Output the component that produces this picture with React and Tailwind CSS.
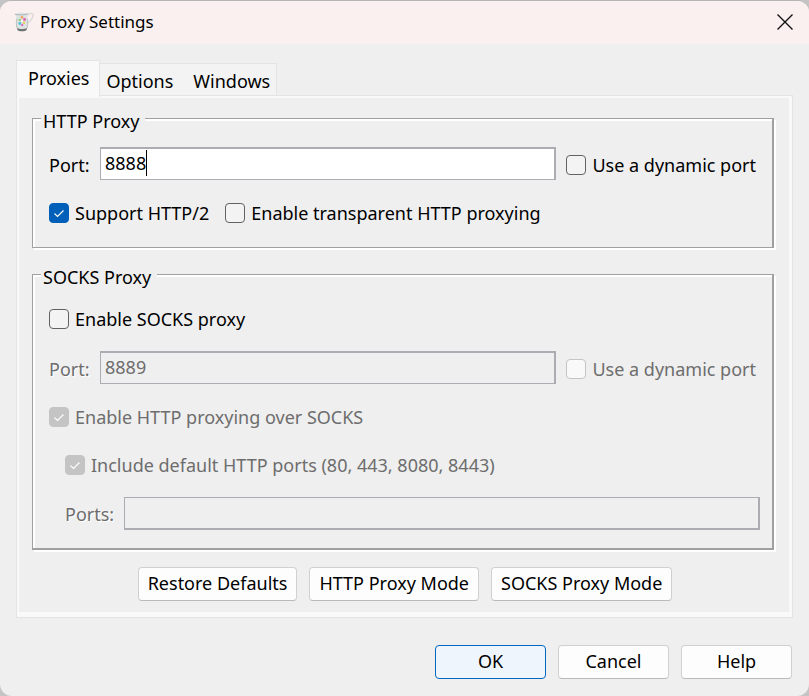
import { useState } from 'react'

const TABS = ['Options', 'Windows']
const MODES = ['Restore Defaults', 'HTTP Proxy Mode', 'SOCKS Proxy Mode']

function JugIcon() {
  return (
    <svg viewBox="0 0 20 20" className="h-5 w-5" aria-hidden="true">
      <path d="M13.5 3C16 .8 19.300.6 19 3.500c-.2 3-2.500 5.500-5.500 7.500" fill="none" stroke="#dcd8d8" strokeWidth="1.300" />
      <path d="M.8 2.200C2.500 1 4.500.7 7 .7s5.500.2 7 1.200c-.8 1.800-1 3.300-.6 5.600.5 3 .6 6.500-.4 9.500-.6 2.800-9.400 2.800-10 0-1-3.500-.8-6.500-.4-9.500C2.900 5.500 2.400 4 .8 2.200z" fill="#dde3e3" />
      <path d="M.8 2.200c3.500 1 9.700 1 13.200-.3" fill="none" stroke="#a9b0b1" strokeWidth=".9" />
      <path d="M2.800 6.500c-.6 4-.5 7 .2 9.500M13.200 6.500c.7 4 .6 7 0 9.500" fill="none" stroke="#b5bdbd" strokeWidth=".9" />
      <path d="M3 16c2.500 1.300 7.500 1.300 10 0l-.3 1.800c-1.500 2-7.900 2-9.400 0z" fill="#6e7372" />
      <circle cx="8" cy="5.300" r="1.300" fill="#f0a05c" />
      <circle cx="10.500" cy="7.500" r="1.400" fill="#e35fae" />
      <circle cx="5.700" cy="8" r="1.300" fill="#9ccf7c" />
      <circle cx="8" cy="9" r="1" fill="#fff" />
      <circle cx="10" cy="10.800" r="1.200" fill="#e8d150" />
      <circle cx="5.800" cy="11.500" r="1.400" fill="#4fc3dc" />
      <circle cx="8.200" cy="13" r="1.200" fill="#d973c4" />
    </svg>
  )
}

function Checkbox({ label, checked = false, disabled = false }) {
  const [on, setOn] = useState(checked)
  return (
    <label className={`flex shrink-0 items-center gap-1.5 whitespace-nowrap ${disabled ? 'text-[#6d6d6d]' : ''}`}>
      <span className="grid h-5 w-5 place-items-center">
        <input
          type="checkbox"
          checked={on}
          disabled={disabled}
          onChange={e => setOn(e.target.checked)}
          className="col-start-1 row-start-1 h-5 w-5 appearance-none rounded border border-[#626262] bg-[#f3f3f3] checked:border-[#005fb8] checked:bg-[#005fb8] disabled:border-[#c4c4c4] disabled:bg-[#f9f9f9] disabled:checked:border-[#c4c4c4] disabled:checked:bg-[#c4c4c4]"
        />
        {on && (
          <svg viewBox="0 0 20 20" className="pointer-events-none col-start-1 row-start-1 h-5 w-5" aria-hidden="true">
            <path d="M5.500 10.500l3 3 6-6" fill="none" stroke="#fff" strokeWidth="1.100" />
          </svg>
        )}
      </span>
      {label}
    </label>
  )
}

function Group({ title, deep = false, children }) {
  return (
    <fieldset className={`min-w-0 border border-r-2 border-[#a0a0a0] pr-3 pl-4 shadow-[2px_2px_0_#fff,inset_2px_2px_0_#fff] ${deep ? 'border-b-2' : ''}`}>
      <legend className="-ml-2 bg-[#efefef] pt-1.5 pr-1.5 pl-0.5 leading-[18px]">{title}</legend>
      {children}
    </fieldset>
  )
}

function PortRow({ id, initial, disabled = false, focused = false }) {
  const [port, setPort] = useState(initial)
  return (
    <div className="flex items-center">
      <label htmlFor={id} className={`w-[51px] shrink-0 pt-0.5 ${disabled ? 'text-[#6d6d6d] [text-shadow:1px_1px_0_#fff]' : ''}`}>
        Port:
      </label>
      <div className="relative min-w-0 flex-1">
        <input
          id={id}
          value={port}
          disabled={disabled}
          onChange={e => setPort(e.target.value)}
          className="block h-[33px] w-full border border-t-2 border-r-2 border-[#abadb3] bg-white px-1 pb-0.5 caret-transparent outline-none disabled:bg-[#efefef] disabled:text-[#6d6d6d]"
        />
        {focused && <span className="absolute top-[3px] h-[26px] w-px bg-black" style={{ left: `calc(${port.length}ch + 5px)` }} />}
      </div>
      <div className="pt-0.5 pr-1 pl-2.5">
        <Checkbox label="Use a dynamic port" disabled={disabled} />
      </div>
    </div>
  )
}

function DialogButton({ children, primary = false }) {
  return (
    <button
      type="button"
      className={`h-[34px] w-[111px] rounded border pb-0.5 ${primary ? 'border-[#0067c0] bg-[#eff5fd]' : 'border-[#d0d0d0] border-b-[#bababa] bg-[#fdfdfd]'}`}
    >
      {children}
    </button>
  )
}

export default function App() {
  const [ports, setPorts] = useState('')

  return (
    <div className="min-h-screen bg-[#c4c4c4] font-['Noto_Sans','Open_Sans',sans-serif] text-[18px] leading-6 text-black">
      <div className="flex min-h-screen flex-col overflow-hidden rounded-xl border-t border-[#b4b4b4] bg-[#efefef]">
        <header className="flex h-[43px] items-center bg-[#f9f0ef] pr-4 pb-0.5 pl-3.5">
          <JugIcon />
          <h1 className="ml-1.5 flex-1 text-[17px]">Proxy Settings</h1>
          <button type="button" aria-label="Close">
            <svg viewBox="0 0 16 16" className="h-4 w-4" aria-hidden="true">
              <path d="M.5.5l15 15M15.500.5l-15 15" stroke="#111" strokeWidth="1.400" />
            </svg>
          </button>
        </header>

        <main className="flex flex-1 flex-col px-4 pt-4 pb-[17px]">
          <div role="tablist" className="flex items-end">
            <button type="button" role="tab" aria-selected="true" className="relative -mb-0.5 h-[37px] border border-b-0 border-[#e4e4e4] bg-[#f9f9f9] pr-2.5 pb-0.5 pl-[11px]">
              Proxies
            </button>
            {TABS.map((t, i) => (
              <button
                key={t}
                type="button"
                role="tab"
                aria-selected="false"
                className={`h-8 border-t border-[#e4e4e4] bg-[#f3f3f3] pt-0.5 ${i === 0 ? 'pr-2.5 pl-1.5' : 'border-r pr-1.5 pl-2.5'}`}
              >
                {t}
              </button>
            ))}
          </div>

          <div className="border border-[#e4e4e4]">
            <div className="border-2 border-r-[3px] border-b-[5px] border-[#f9f9f9] pt-2 pr-[15px] pb-[11px] pl-[13px]">
              <Group title="HTTP Proxy">
                <div className="pt-[17px] pb-[22px]">
                  <PortRow id="http-port" initial="8888" focused />
                  <div className="mt-[21px] flex items-center gap-4">
                    <Checkbox label="Support HTTP/2" checked />
                    <Checkbox label="Enable transparent HTTP proxying" />
                  </div>
                </div>
              </Group>

              <div className="pt-3.5">
                <Group title="SOCKS Proxy" deep>
                  <div className="pt-[21px] pb-[18px]">
                    <Checkbox label="Enable SOCKS proxy" />
                    <div className="pt-5 pb-[21px]">
                      <PortRow id="socks-port" initial="8889" disabled />
                    </div>
                    <Checkbox label="Enable HTTP proxying over SOCKS" checked disabled />
                    <div className="pt-6 pl-4">
                      <Checkbox label="Include default HTTP ports (80, 443, 8080, 8443)" checked disabled />
                      <div className="mt-5 flex items-center">
                        <label htmlFor="ports" className="w-[59px] shrink-0 text-[#6d6d6d] [text-shadow:1px_1px_0_#fff]">
                          Ports:
                        </label>
                        <input
                          id="ports"
                          value={ports}
                          disabled
                          onChange={e => setPorts(e.target.value)}
                          className="h-[33px] min-w-0 flex-1 border border-r-2 border-b-2 border-[#abadb3] px-1"
                        />
                      </div>
                    </div>
                  </div>
                </Group>
              </div>

              <div className="mt-[17px] flex justify-center gap-3 pl-1">
                {MODES.map(m => (
                  <button key={m} type="button" className="h-[34px] rounded border border-[#d0d0d0] border-b-[#bababa] bg-[#fdfdfd] px-[9px] pb-0.5 whitespace-nowrap">
                    {m}
                  </button>
                ))}
              </div>
            </div>
          </div>

          <div className="mt-auto flex justify-end gap-3 pt-6 pr-px">
            <DialogButton primary>OK</DialogButton>
            <DialogButton>Cancel</DialogButton>
            <DialogButton>Help</DialogButton>
          </div>
        </main>
      </div>
    </div>
  )
}
